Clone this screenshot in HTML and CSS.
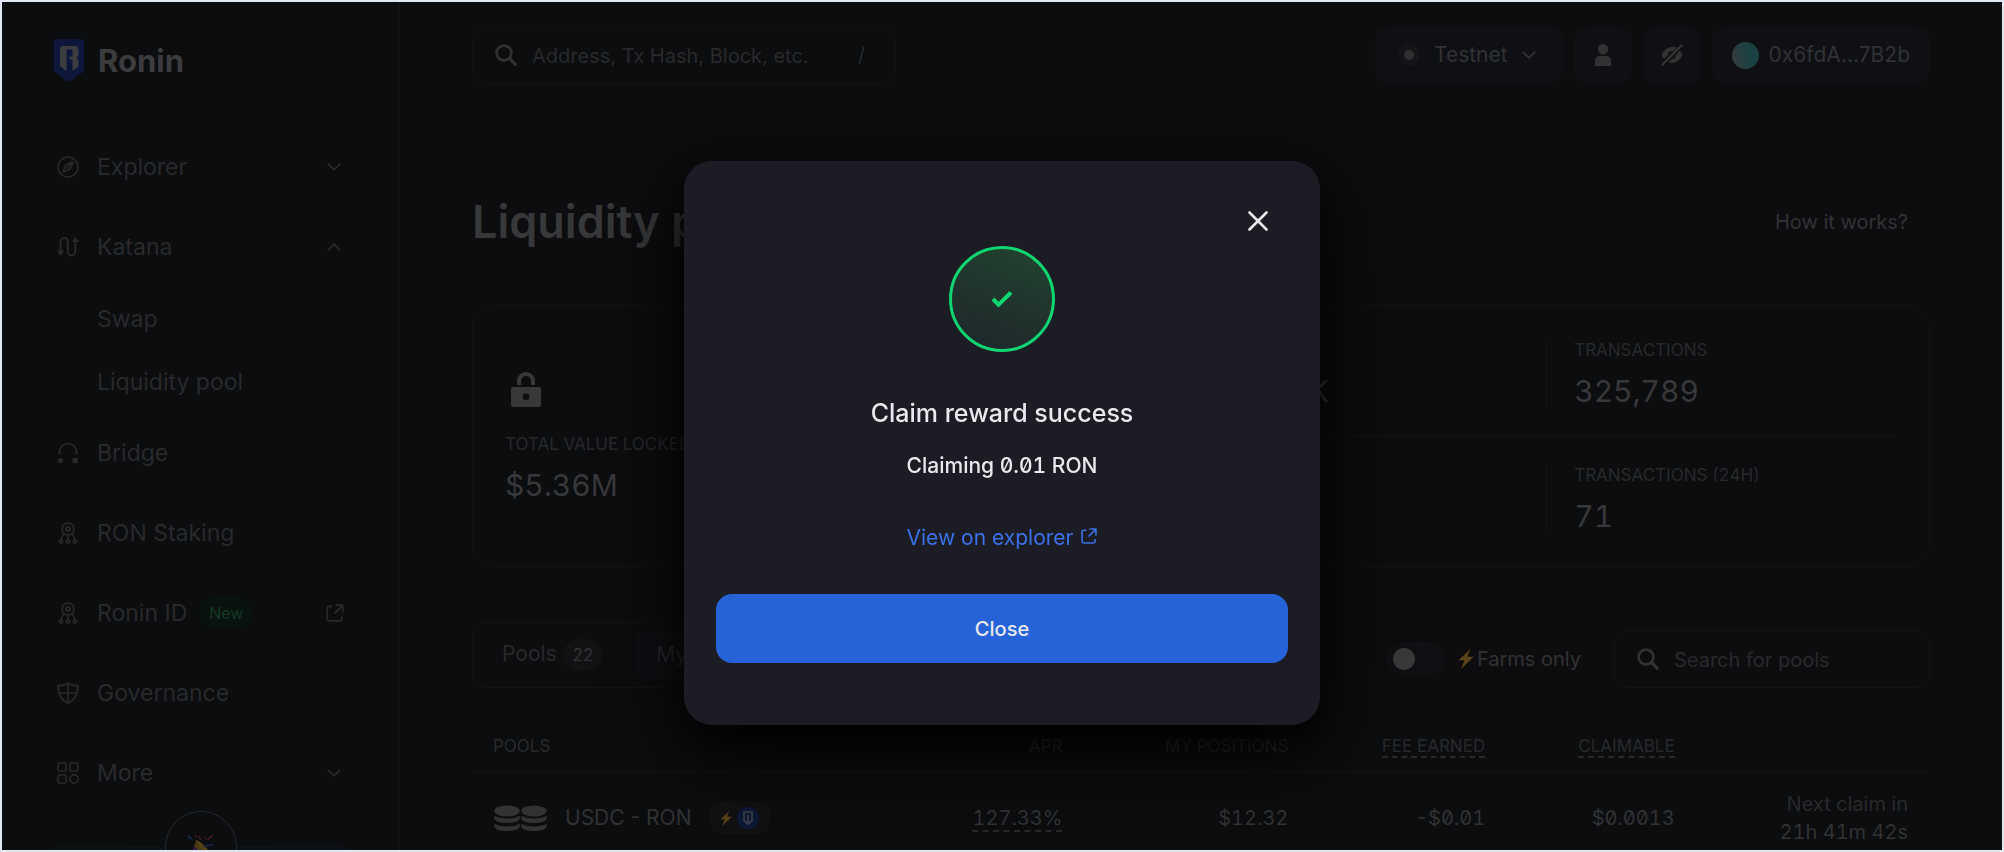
FILE: index.html
```html
<!DOCTYPE html>
<html lang="en">
<head>
<meta charset="utf-8">
<title>Ronin – Liquidity pools</title>
<link rel="stylesheet" href="styles.css">
</head>
<body>
<svg class="sprite" aria-hidden="true">
  <symbol id="chevron" viewBox="0 0 14 8"><path d="M1.2 1.2 7 6.8l5.8-5.6" fill="none" stroke="currentColor" stroke-width="1.7" stroke-linecap="round" stroke-linejoin="round"/></symbol>
  <symbol id="search" viewBox="0 0 22 22"><circle cx="9" cy="9" r="7.4" fill="none" stroke="currentColor" stroke-width="2.6"/><path d="m14.5 14.5 5.8 5.8" stroke="currentColor" stroke-width="3.2" stroke-linecap="round"/></symbol>
  <symbol id="external" viewBox="0 0 18 18"><path d="M6 2.5H3A1.8 1.8 0 0 0 1.2 4.3v10.7A1.8 1.8 0 0 0 3 16.8h11a1.8 1.8 0 0 0 1.8-1.8v-2.5M9.5 1.2h7.300v7.300M16.500 1.500 8.500 9.500" fill="none" stroke="currentColor" stroke-width="1.8" stroke-linejoin="round"/></symbol>
  <symbol id="node" viewBox="0 0 22 22"><g fill="none" stroke="currentColor" stroke-width="1.700"><circle cx="11" cy="7" r="6"/><circle cx="11" cy="7" r="2" stroke-width="2"/><circle cx="4" cy="19.500" r="1.700"/><circle cx="11" cy="19.500" r="1.700"/><circle cx="18" cy="19.500" r="1.700"/><path d="M11 13v4.800M7 11.800c-.3 2-2.700 2.400-3 6M15 11.800c.3 2 2.700 2.400 3 6"/></g></symbol>
  <symbol id="bolt" viewBox="0 0 16 20"><path d="M12.500 0 .5 11.300h6L3 20 15.700 7.800H9.300z" fill="currentColor"/></symbol>
</svg>

<div class="app">
  <aside class="sidebar">
    <a class="brand" href="#">
      <svg width="30" height="43" viewBox="0 0 30 43" aria-hidden="true"><path d="M3 0h24a3 3 0 0 1 3 3v27.500a3 3 0 0 1-1.200 2.400L17 41.800a3.200 3.200 0 0 1-4 0L1.200 32.900A3 3 0 0 1 0 30.500V3a3 3 0 0 1 3-3z" fill="#0e163c"/><path fill-rule="evenodd" d="M9 7h12.500a3 3 0 0 1 3 3v6.500l-2 2.500 2 2v6.500L18.500 32V20.500H15.500V32H12l-6-5.300V10a3 3 0 0 1 3-3zM12.500 10.500V32h3V17.500h3v-7z" fill="#3d3d40"/></svg>
      <span>Ronin</span>
    </a>
    <nav class="nav">
      <a class="item" href="#">
        <svg width="22" height="22" viewBox="0 0 22 22"><g fill="none" stroke="currentColor" stroke-width="1.500" stroke-linejoin="round"><circle cx="11" cy="11" r="10"/><path d="m16 6-2.800 7.200L6 16l2.800-7.200zM9.500 12.500 16 6"/></g></svg>
        <span>Explorer</span><svg class="end" width="14" height="8"><use href="#chevron"/></svg>
      </a>
      <a class="item" href="#">
        <svg width="22" height="22" viewBox="0 0 22 22"><path d="M3.500 16V5.800a3.700 3.700 0 0 1 7.400 0v10a3.700 3.700 0 0 0 7.400 0V5" fill="none" stroke="currentColor" stroke-width="2"/><path d="M0 14.500h7L3.500 20zM15 6h7L18.500.8z" fill="currentColor"/></svg>
        <span>Katana</span><svg class="end up" width="14" height="8"><use href="#chevron"/></svg>
      </a>
      <a class="item sub" href="#"><span>Swap</span></a>
      <a class="item sub" href="#"><span>Liquidity pool</span></a>
      <a class="item" href="#">
        <svg width="22" height="22" viewBox="0 0 22 22"><path d="M2.500 12.500V10a8.500 8.500 0 0 1 17 0v2.500" fill="none" stroke="currentColor" stroke-width="1.700"/><circle cx="3.400" cy="18.600" r="2.700" fill="currentColor"/><path d="M15.500 16h5.500v5h-5.500z" fill="currentColor"/></svg>
        <span>Bridge</span>
      </a>
      <a class="item" href="#"><svg width="22" height="22"><use href="#node"/></svg><span>RON Staking</span></a>
      <a class="item" href="#"><svg width="22" height="22"><use href="#node"/></svg><span>Ronin ID</span><span class="new">New</span><svg class="end" width="18" height="18"><use href="#external"/></svg></a>
      <a class="item" href="#">
        <svg width="22" height="22" viewBox="0 0 22 22"><path d="M11 1C8.500 3 5 3.800 1 3.800 1 12 4 18 11 21.200 18 18 21 12 21 3.800 17 3.800 13.500 3 11 1zM11 1v20M2 11h18" fill="none" stroke="currentColor" stroke-width="1.700" stroke-linejoin="round"/></svg>
        <span>Governance</span>
      </a>
      <a class="item" href="#">
        <svg width="22" height="22" viewBox="0 0 22 22"><g fill="none" stroke="currentColor" stroke-width="1.600"><rect x="1" y="1" width="8" height="8" rx="1.500"/><rect x="13" y="1" width="8" height="8" rx="1.500"/><rect x="1" y="13" width="8" height="8" rx="1.500"/><circle cx="17" cy="17" r="4.100"/></g></svg>
        <span>More</span><svg class="end" width="14" height="8"><use href="#chevron"/></svg>
      </a>
    </nav>
    <div class="promo">
      <div class="promo-badge">
        <svg width="28" height="28" viewBox="0 0 28 28" aria-hidden="true"><path d="M9 6 3 27l20-7C19 17 12 11 9 6z" fill="#4a3a10"/><path d="m7 12 11 10-4 1.500-8.500-7z" fill="#33183f"/><path d="M9 6c3 0 13 9 14 14-5-2-12-9-14-14z" fill="#5a4412"/><path d="M2 1c-1 3 1 4 3 3M16 13c3-3 6 0 10-3" fill="none" stroke="#152a55" stroke-width="1.500"/><path d="M25 1c0 4-4 2-4 5M12 2l2 4" fill="none" stroke="#4c1526" stroke-width="1.500"/><circle cx="9" cy="2" r="1" fill="#4c1526"/><circle cx="18" cy="4" r="1" fill="#4c1526"/></svg>
      </div>
    </div>
  </aside>

  <main class="main">
    <header class="topbar">
      <label class="field global">
        <svg width="22" height="22"><use href="#search"/></svg>
        <input type="search" aria-label="Search the explorer" placeholder="Address, Tx Hash, Block, etc.">
        <kbd>/</kbd>
      </label>
      <div class="actions">
        <button class="chip network" type="button"><i class="dot"></i>Testnet<svg width="14" height="8"><use href="#chevron"/></svg></button>
        <button class="chip square" type="button" aria-label="Profile"><svg width="18" height="22" viewBox="0 0 18 22"><circle cx="9" cy="5.300" r="5.200" fill="currentColor"/><path d="M1 22v-5.500A4.500 4.500 0 0 1 5.500 12h7a4.500 4.500 0 0 1 4.500 4.500V22z" fill="currentColor"/></svg></button>
        <button class="chip square" type="button" aria-label="Hide balances"><svg width="22" height="22" viewBox="0 0 22 22"><path d="M16 3.600C9 .8 3 5.500.5 11c.6 1.400 1.500 2.800 2.600 4L7 11a4 4 0 0 1 4-4l1.500.2zM19 6.600c1.100 1.300 2 2.800 2.500 4.400C19 16.500 13.500 20.500 7.500 18.600l3.300-3.500A4 4 0 0 0 15 11z" fill="currentColor"/><path d="M1.500 20.500 20.500 1.500" stroke="currentColor" stroke-width="2.400" stroke-linecap="round"/></svg></button>
        <button class="chip wallet" type="button"><i class="avatar"></i>0x6fdA...7B2b</button>
      </div>
    </header>

    <div class="heading">
      <h1>Liquidity pools</h1>
      <a href="#">How it works?</a>
    </div>

    <section class="stats">
      <div class="stat tvl">
        <svg width="30" height="35" viewBox="0 0 30 35" aria-hidden="true"><path d="M8 13V9a7 7 0 0 1 14 0v4" fill="none" stroke="currentColor" stroke-width="4"/><path fill-rule="evenodd" d="M2 15h26a2 2 0 0 1 2 2v16a2 2 0 0 1-2 2H2a2 2 0 0 1-2-2V17a2 2 0 0 1 2-2zm13 6.500a3.300 3.300 0 1 0 0 6.600 3.300 3.300 0 0 0 0-6.600z" fill="currentColor"/></svg>
        <h2>TOTAL VALUE LOCKED</h2>
        <p>$5.36M</p>
      </div>
      <div class="stat-grid">
        <div class="stat-row">
          <div class="stat"></div>
          <div class="stat"><h2>FEES</h2><p>$5.36K</p></div>
          <div class="stat"><h2>TRANSACTIONS</h2><p>325,789</p></div>
        </div>
        <div class="stat-row">
          <div class="stat"></div>
          <div class="stat"></div>
          <div class="stat"><h2>TRANSACTIONS (24H)</h2><p>71</p></div>
        </div>
      </div>
    </section>

    <div class="toolbar">
      <div class="tabs">
        <button type="button">Pools <span class="count">22</span></button>
        <button type="button" class="active">My positions</button>
      </div>
      <label class="switch"><input type="checkbox" role="switch"><svg class="bolt" width="16" height="20" aria-hidden="true"><use href="#bolt"/></svg>Farms only</label>
      <label class="field pools">
        <svg width="22" height="22"><use href="#search"/></svg>
        <input type="search" aria-label="Search for pools" placeholder="Search for pools">
      </label>
    </div>

    <table class="table">
      <colgroup><col class="c-pool"><col class="c-apr"><col class="c-pos"><col class="c-fee"><col class="c-claim"><col class="c-next"></colgroup>
      <thead>
        <tr><th>POOLS</th><th>APR</th><th>MY POSITIONS</th><th><span class="hint">FEE EARNED</span></th><th><span class="hint">CLAIMABLE</span></th><th></th></tr>
      </thead>
      <tbody>
        <tr>
          <td>
            <div class="pool">
              <svg class="coins" width="53" height="27" viewBox="0 0 53 27" aria-hidden="true"><g fill="currentColor"><ellipse cx="13" cy="6" rx="12.700" ry="5.500"/><path d="M.3 10.500c4 4 21.400 4 25.400 0v3c-1 6-24.400 6-25.400 0zM.3 18.500c4 4 21.400 4 25.400 0v3c-1 6-24.400 6-25.400 0z"/><ellipse cx="40" cy="6" rx="12.700" ry="5.500"/><path d="M27.300 10.500c4 4 21.400 4 25.400 0v3c-1 6-24.400 6-25.400 0zM27.300 18.500c4 4 21.400 4 25.400 0v3c-1 6-24.400 6-25.400 0z"/></g></svg>
              <span>USDC - RON</span>
              <span class="reward"><svg class="bolt" width="12" height="15"><use href="#bolt"/></svg><svg width="22" height="22" viewBox="0 0 22 22"><circle cx="11" cy="11" r="11" fill="#0e1838"/><path d="M7 5h8v8.500L11 17l-4-3.500zM11 8v8" fill="none" stroke="#3d414c" stroke-width="1.700"/></svg></span>
            </div>
          </td>
          <td class="num"><span class="hint">127.33%</span></td>
          <td class="num">$12.32</td>
          <td class="num">-$0.01</td>
          <td class="num">$0.0013</td>
          <td class="next"><span>Next claim in</span><br>21h 41m 42s</td>
        </tr>
      </tbody>
    </table>
  </main>
</div>

<div class="overlay">
  <section class="dialog" role="dialog" aria-modal="true" aria-labelledby="dialog-title">
    <button class="dismiss" type="button" aria-label="Dismiss"><svg width="20" height="20" viewBox="0 0 20 20"><path d="m1.500 1.500 17 17M18.500 1.500l-17 17" stroke="currentColor" stroke-width="2.600" stroke-linecap="round"/></svg></button>
    <div class="success"><svg width="22" height="18" viewBox="0 0 22 18" aria-hidden="true"><path d="m2 9 5.500 5.600L20 2.500" fill="none" stroke="currentColor" stroke-width="4"/></svg></div>
    <h2 id="dialog-title">Claim reward success</h2>
    <p>Claiming 0.01 RON</p>
    <a href="#">View on explorer<svg width="16" height="16"><use href="#external"/></svg></a>
    <button class="primary" type="button">Close</button>
  </section>
</div>
</body>
</html>
```
FILE: styles.css
```css
:root {
  --page: #0d0d0f;
  --panel: #0b0d0f;
  --chip: #0f1014;
  --line: #121315;
  --faint: #29292b;
  --muted: #323234;
  --strong: #38383a;
  --bolt: #5a4418;
}
* { box-sizing: border-box; }
body {
  margin: 0;
  height: 100vh;
  overflow: hidden;
  border: 2px solid #dfe8f3;
  background: var(--page);
  color: var(--muted);
  font: 20px/28px Inter, "Liberation Sans", sans-serif;
}
a { color: inherit; text-decoration: none; }
h1, h2, p { margin: 0; font-weight: 400; }
button { border: 0; padding: 0; background: none; color: inherit; font: inherit; }
.sprite { position: absolute; width: 0; height: 0; }
svg { display: block; flex: none; }

.app { display: flex; height: 100%; overflow: hidden; }

/* Sidebar */
.sidebar {
  flex: none;
  display: flex;
  flex-direction: column;
  width: 398px;
  border-right: 1px solid var(--line);
  background: var(--panel);
}
.brand {
  display: flex;
  align-items: center;
  gap: 14px;
  padding: 37px 52px 45px;
  color: #3c3c3e;
  font-size: 31px;
  font-weight: 700;
}
.nav { padding: 0 55px; }
.item {
  display: flex;
  align-items: center;
  height: 80px;
  color: var(--faint);
  font-size: 23px;
}
.item span { margin-left: 18px; }
.item .end { margin-left: auto; margin-right: 3px; }
.item .end[width="18"] { margin-right: 0; }
.up { transform: rotate(180deg); }
.item.sub { height: 63px; padding-left: 22px; }
.item .new {
  margin-left: 12px;
  padding: 2px 10px;
  border-radius: 16px;
  background: #09120f;
  color: #143a22;
  font-size: 16px;
}
.promo {
  height: 120px;
  margin: 33px 40px 0;
  border-radius: 24px;
  background: linear-gradient(90deg, #0c1211, #0d1117);
}
.promo-badge {
  display: flex;
  justify-content: center;
  width: 72px;
  height: 72px;
  margin: -35px auto 0;
  padding-top: 22px;
  border: 1px solid #222a31;
  border-radius: 50%;
  background: var(--panel);
}

/* Main */
.main { flex: 1; min-width: 0; padding: 24px 72px 0; }
.topbar { display: flex; justify-content: space-between; }
.field {
  display: flex;
  align-items: center;
  height: 58px;
  padding: 0 22px;
  border: 1px solid var(--line);
  border-radius: 14px;
  gap: 15px;
}
.field input {
  flex: 1;
  min-width: 0;
  padding: 2px 0 0;
  border: 0;
  outline: 0;
  background: none;
  color: var(--muted);
  font: inherit;
}
.field input::placeholder { color: var(--faint); opacity: 1; }
.field kbd { margin-right: 8px; font: inherit; font-weight: 300; }
.global { width: 424px; background: var(--panel); }
.pools { width: 316px; }
.actions { display: flex; gap: 11px; }
.chip {
  display: flex;
  align-items: center;
  justify-content: center;
  height: 58px;
  padding: 0 22px;
  border-radius: 14px;
  background: var(--chip);
  font-size: 21px;
}
.square { width: 58px; padding: 0; }
.network { gap: 14px; padding: 0 27px 0 23px; }
.dot { width: 22px; height: 22px; border: 6px solid #141518; border-radius: 50%; background: #303033; }
.wallet { gap: 10px; padding: 0 20px; }
.avatar { width: 27px; height: 27px; border-radius: 50%; background: linear-gradient(80deg, #303c3e 15%, #1a4243 65%); }

.heading { display: flex; align-items: center; justify-content: space-between; margin-top: 110px; padding-right: 22px; }
.heading h1 { color: var(--strong); font-size: 45px; line-height: 56px; font-weight: 600; }

.stats {
  display: flex;
  height: 262px;
  margin-top: 55px;
  padding: 0 32px;
  border: 1px solid var(--line);
  border-radius: 22px;
  background: var(--panel);
}
.stat { font-feature-settings: "tnum"; }
.stat h2 { color: var(--faint); font-size: 17px; line-height: 24px; white-space: nowrap; }
.stat p { margin-top: 9px; color: var(--strong); font-size: 30px; line-height: 40px; }
.tvl { flex: 10; min-width: 0; padding-top: 66px; }
.tvl svg { margin: 0 0 25px 6px; color: var(--strong); }
.stat-grid { flex: 31; min-width: 0; padding: 6px 0; }
.stat-row { display: flex; align-items: center; height: 50%; }
.stat-row + .stat-row { border-top: 1px solid var(--line); }
.stat-row .stat { flex: 1; height: 72px; padding-left: 27px; border-left: 1px solid var(--line); }

.toolbar { display: flex; align-items: flex-end; margin-top: 55px; }
.tabs {
  display: flex;
  align-items: center;
  height: 66px;
  margin-right: auto;
  padding: 0 8px;
  border: 1px solid var(--line);
  border-radius: 14px;
}
.tabs button { height: 48px; padding: 0 21px; border-radius: 10px; color: var(--faint); font-size: 21px; }
.tabs button:first-child { margin-right: 11px; }
.tabs .active { background: var(--chip); }
.count { display: inline-block; padding: 2px 10px; border-radius: 16px; background: #121214; color: var(--muted); font-size: 17px; }
.switch { display: flex; align-items: center; height: 58px; margin-right: 33px; }
.switch input {
  appearance: none;
  width: 58px;
  height: 32px;
  margin: 0 13px 0 0;
  padding: 4px 5px;
  border: 1px solid var(--line);
  border-radius: 16px;
  background: var(--chip);
}
.switch input::before { content: ""; display: block; width: 22px; height: 22px; border-radius: 50%; background: #39393b; }
.switch input:checked::before { margin-left: auto; }
.switch .bolt { margin-right: 3px; }
.bolt { color: var(--bolt); }

.table {
  width: 100%;
  margin-top: 29px;
  border-collapse: collapse;
  table-layout: fixed;
  background: var(--panel);
}
.c-pool { width: 28%; }
.c-apr { width: 14%; }
.c-pos { width: 15.5%; }
.c-fee { width: 13.5%; }
.c-claim { width: 13%; }
.c-next { width: 16%; }
.table th { height: 54px; padding: 4px 22px 0 21px; border-bottom: 1px solid var(--line); color: var(--faint); font-size: 17px; line-height: 22px; font-weight: 400; text-align: right; }
.table th:first-child, .table td:first-child { text-align: left; }
.table td { height: 94px; padding: 0 22px; text-align: right; }
.num { font-feature-settings: "tnum", "zero"; }
.hint { border-bottom: 2px dashed var(--faint); }
.pool { display: flex; align-items: center; gap: 18px; font-size: 21px; }
.reward { display: flex; align-items: center; justify-content: center; gap: 5px; width: 61px; height: 32px; border-radius: 12px; background: #111113; }
.table .next { font-feature-settings: "tnum"; }
.next span { color: var(--faint); }

/* Dialog */
.overlay {
  position: fixed;
  inset: 0;
  display: flex;
  align-items: center;
  justify-content: center;
  padding-top: 34px;
}
.dialog {
  position: relative;
  display: flex;
  flex-direction: column;
  align-items: center;
  width: 636px;
  padding: 85px 32px 62px;
  border-radius: 28px;
  background: #1c1c25;
  box-shadow: 0 24px 80px #000, 0 16px 32px rgba(0, 0, 0, .4);
  color: #e9e9ed;
}
.dismiss { position: absolute; top: 50px; right: 52px; }
.success {
  display: flex;
  align-items: center;
  justify-content: center;
  width: 106px;
  height: 106px;
  border: 3px solid #10d672;
  border-radius: 50%;
  background: linear-gradient(200deg, #22432f, #1e252b);
  color: #10d672;
}
.dialog h2 { margin-top: 43px; font-size: 25px; line-height: 36px; font-weight: 500; }
.dialog p { margin-top: 21px; font-size: 21px; font-weight: 500; font-feature-settings: "tnum", "zero"; }
.dialog a { display: flex; gap: 8px; margin-top: 44px; color: #3a71e8; font-size: 21px; font-weight: 400; }
.dialog a svg { margin-top: 4px; }
.primary { width: 100%; height: 69px; margin-top: 42px; border-radius: 16px; background: #2663d9; font-weight: 500; }
```
